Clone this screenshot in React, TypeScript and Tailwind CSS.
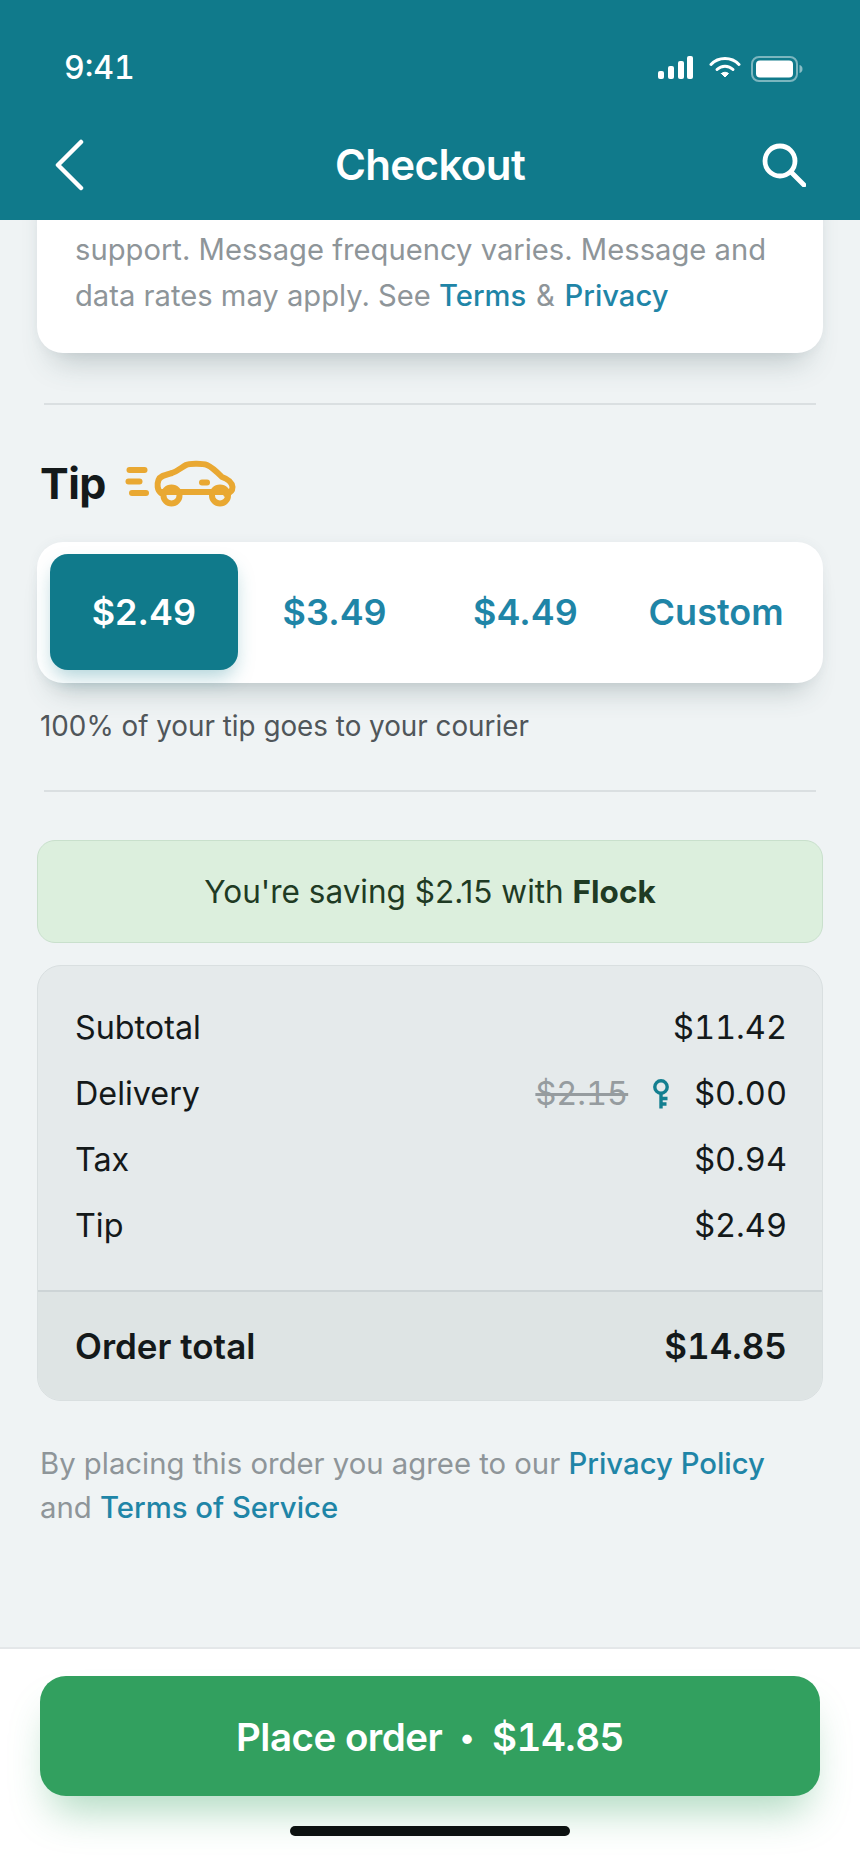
function StatusIcons() {
  return (
    <div className="flex items-center">
      <svg width="36" height="24" viewBox="0 0 36 24" fill="#fff" className="mr-[16px]">
        <rect x="1" y="15" width="6" height="8" rx="2" />
        <rect x="11" y="10" width="6" height="13" rx="2" />
        <rect x="21" y="5" width="6" height="18" rx="2" />
        <rect x="30" y="0" width="6" height="23" rx="2" />
      </svg>
      <svg width="32" height="22" viewBox="0 0 32 22" fill="none" stroke="#fff" strokeWidth="3" strokeLinecap="round" className="mr-[10px] -mt-[2px]">
        <path d="M2 8.5C9.5 0.5 22.5 0.5 30 8.5" />
        <path d="M8 13.5C12.5 9 19.5 9 24 13.5" />
        <path d="M12.5 17.5L16 21L19.5 17.5C17.5 15.8 14.5 15.8 12.5 17.5Z" fill="#fff" strokeWidth="1" />
      </svg>
      <svg width="52" height="26" viewBox="0 0 52 26" fill="none" className="mt-[2px]">
        <rect x="1" y="1" width="45" height="24" rx="7" stroke="#fff" strokeOpacity="0.45" strokeWidth="2" />
        <rect x="5" y="4.5" width="37" height="17" rx="4" fill="#fff" />
        <path d="M48.5 9C50.5 9.5 51.5 11 51.5 13C51.5 15 50.5 16.5 48.5 17Z" fill="#fff" fillOpacity="0.5" />
      </svg>
    </div>
  );
}

function CarIcon() {
  return (
    <svg width="116" height="50" viewBox="14 18 116 50" fill="none" stroke="#E9A832" strokeWidth="6" strokeLinecap="round" strokeLinejoin="round">
      <path d="M19.5 30H34.5" />
      <path d="M18.5 41.5H29.5" />
      <path d="M22 53H36" />
      <path d="M51 53C47 50 47 44 48.5 40C50 36 55 35 62 33C68 31 72 27 76 25C79 23.5 92 23 97 25C102 27 108 33 112 37C118 39 122 42 122.5 47C122.5 51 120 53 116 54" />
      <path d="M52 52H116" />
      <circle cx="61.5" cy="55.5" r="8" />
      <circle cx="110" cy="55.5" r="8" />
      <path d="M92 42.5H97" />
    </svg>
  );
}

function KeyIcon() {
  return (
    <svg width="18" height="30" viewBox="0 0 18 30" fill="none" stroke="#137F90" strokeWidth="3.4">
      <circle cx="9" cy="8" r="6.2" />
      <path d="M9 14V29.5" />
      <path d="M9 19.5H15.5M9 25H14.5" />
    </svg>
  );
}

function SummaryRow({ label, value }: { label: string; value: string }) {
  return (
    <div className="flex h-[66px] items-center justify-between">
      <span>{label}</span>
      <span className="text-[32.5px] tabular-nums">{value}</span>
    </div>
  );
}

export default function App() {
  return (
    <div className="flex h-[1864px] w-[860px] flex-col overflow-hidden bg-[#EFF3F4] font-[Inter,sans-serif] text-[#14191A]">
      <header className="relative z-10 h-[220px] shrink-0 bg-[#107A8B] text-white">
        <div className="flex h-[136px] items-center justify-between pl-[64px] pr-[57px]">
          <span className="text-[32px] font-medium tabular-nums">9:41</span>
          <StatusIcons />
        </div>
        <div className="flex items-center justify-between pl-[54px] pr-[54px]">
          <div className="w-[44px]">
            <svg width="30" height="52" viewBox="0 0 30 52" fill="none" stroke="#fff" strokeWidth="4.5" strokeLinecap="round" strokeLinejoin="round">
              <path d="M27 3L4 26L27 49" />
            </svg>
          </div>
          <h1 className="text-[42px] font-semibold leading-[58px] tracking-[-0.6px]">Checkout</h1>
          <svg width="44" height="44" viewBox="0 0 44 44" fill="none" stroke="#fff" strokeWidth="4.8" strokeLinecap="round">
            <circle cx="18" cy="18" r="15" />
            <path d="M29 29L42 42" />
          </svg>
        </div>
      </header>

      <main className="min-h-0 flex-1 overflow-hidden px-[37px]">
        <div className="-mt-[60px] rounded-[26px] bg-white pb-[34px] pl-[38px] pr-[30px] pt-[21px] text-[29.2px] leading-[46px] text-[#8E9599] shadow-[0_24px_30px_-16px_rgba(60,85,90,0.28),0_0_12px_rgba(60,85,90,0.05)]">
          <p>Notify about order status, promos and</p>
          <p>support. Message frequency varies. Message and</p>
          <p>
            data rates may apply. See <a className="font-medium text-[#1F85A7]">Terms</a> <span className="mx-[1.5px]">&amp;</span> <a className="font-medium text-[#1F85A7]">Privacy</a>
          </p>
        </div>

        <div className="mx-[7px] mt-[50px] h-[2px] bg-[#DADFE1]" />

        <section className="mt-[53px]">
          <div className="flex items-center gap-[18px] pl-[3px]">
            <h2 className="text-[43px] font-bold leading-[40px] tracking-[-0.5px]">Tip</h2>
            <CarIcon />
          </div>
          <div className="mt-[34px] grid grid-cols-4 gap-[3px] rounded-[26px] bg-white pb-[13px] pl-[13px] pr-[13px] pt-[12px] text-[36px] font-semibold text-[#1F85A7] shadow-[0_22px_28px_-16px_rgba(60,85,90,0.3),0_0_12px_rgba(60,85,90,0.05)]">
            <div className="flex h-[116px] items-center justify-center rounded-[18px] bg-[#107A8B] text-white shadow-[0_10px_20px_-4px_rgba(16,122,139,0.35)]">$2.49</div>
            <div className="flex h-[116px] items-center justify-center">$3.49</div>
            <div className="flex h-[116px] items-center justify-center">$4.49</div>
            <div className="flex h-[116px] items-center justify-center">Custom</div>
          </div>
          <p className="mt-[23px] pl-[3px] text-[27.8px] leading-[40px] text-[#50565A]">100% of your tip goes to your courier</p>
        </section>

        <div className="mx-[7px] mt-[44px] h-[2px] bg-[#DADFE1]" />

        <div className="mt-[48px] flex h-[103px] items-center justify-center rounded-[18px] border border-[#C9E0CC] bg-[#DCEFDD] text-[31.5px] text-[#1F3B24]">
          <span>
            You're saving $2.15 with <b className="font-bold">Flock</b>
          </span>
        </div>

        <div className="mt-[22px] overflow-hidden rounded-[24px] border border-[#D9DFE0] bg-[#E5EAEB] text-[32.3px]">
          <div className="pb-[31px] pl-[37px] pr-[35px] pt-[29px]">
            <SummaryRow label="Subtotal" value="$11.42" />
            <div className="flex h-[66px] items-center justify-between">
              <span>Delivery</span>
              <span className="flex items-center text-[32.5px] tabular-nums">
                <s className="text-[#969C9F]">$2.15</s>
                <span className="ml-[24px] mr-[24px] flex">
                  <KeyIcon />
                </span>
                <span>$0.00</span>
              </span>
            </div>
            <SummaryRow label="Tax" value="$0.94" />
            <SummaryRow label="Tip" value="$2.49" />
          </div>
          <div className="flex h-[110px] items-center justify-between border-t-2 border-[#CDD4D6] bg-[#DEE4E4] pl-[37px] pr-[35px] text-[35px] font-semibold">
            <span>Order total</span>
            <span className="tabular-nums">$14.85</span>
          </div>
        </div>

        <p className="mt-[41px] pl-[3px] text-[29.3px] leading-[44px] text-[#8E9599]">
          By placing this order you agree to our <a className="font-medium text-[#1F85A7]">Privacy Policy</a>
          <br />
          and <a className="font-medium text-[#1F85A7]">Terms of Service</a>
        </p>
      </main>

      <footer className="h-[217px] shrink-0 border-t-2 border-[#E4E7E9] bg-white px-[40px] pt-[27px]">
        <button className="flex h-[120px] w-full items-center justify-center rounded-[26px] bg-[#32A05F] pt-[3px] text-[38.5px] font-semibold tracking-[-0.5px] text-white shadow-[0_26px_40px_-12px_rgba(50,160,95,0.4)]">
          Place order
          <span className="ml-[17px] mr-[18px] text-[30px]">•</span>
          <span className="tabular-nums">$14.85</span>
        </button>
        <div className="mx-auto mt-[30px] h-[10px] w-[280px] rounded-full bg-[#0C1110]" />
      </footer>
    </div>
  );
}
